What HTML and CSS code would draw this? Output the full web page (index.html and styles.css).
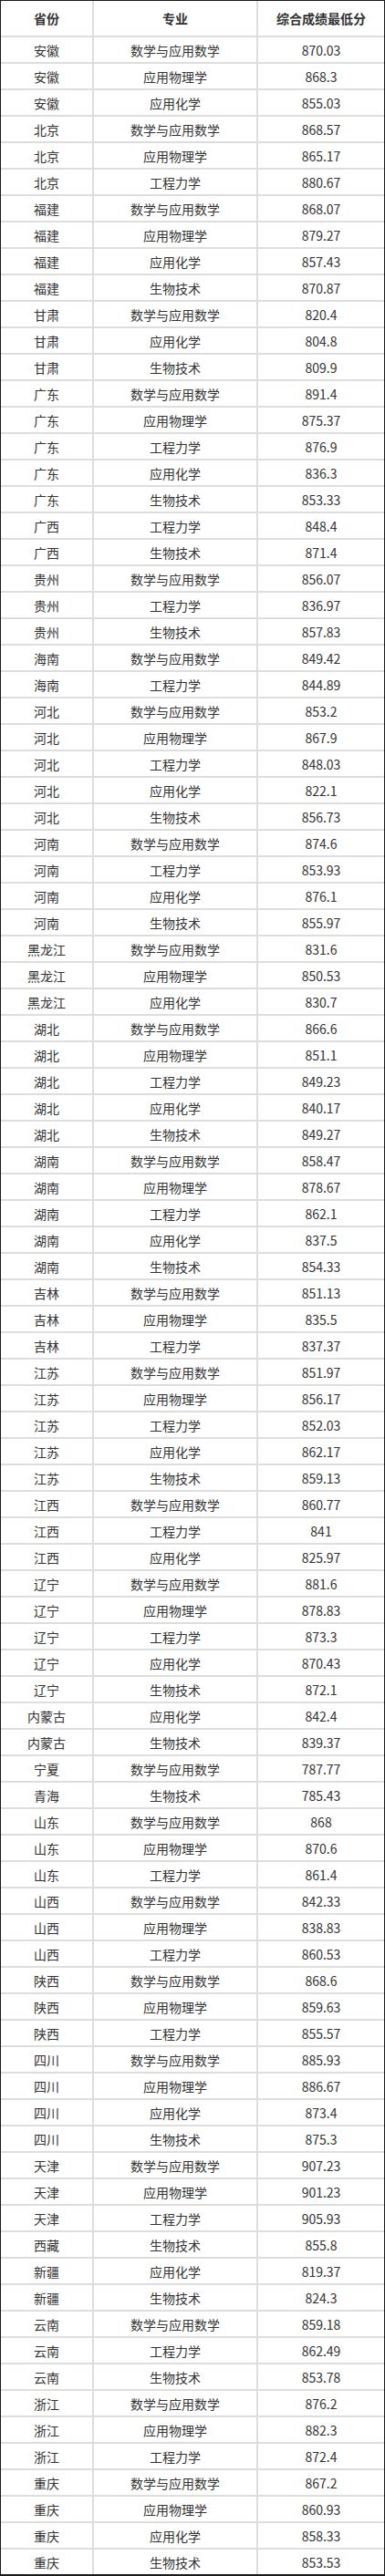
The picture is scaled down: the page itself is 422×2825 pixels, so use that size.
FILE: index.html
```html
<!DOCTYPE html>
<html lang="zh-CN">
<head>
<meta charset="utf-8">
<title>综合成绩最低分</title>
<link rel="stylesheet" href="styles.css">
</head>
<body>
<div class="table">
  <div class="row head"><div class="cell">省份</div><div class="cell">专业</div><div class="cell">综合成绩最低分</div></div>
  <div class="row"><div class="cell">安徽</div><div class="cell">数学与应用数学</div><div class="cell">870.03</div></div>
  <div class="row"><div class="cell">安徽</div><div class="cell">应用物理学</div><div class="cell">868.3</div></div>
  <div class="row"><div class="cell">安徽</div><div class="cell">应用化学</div><div class="cell">855.03</div></div>
  <div class="row"><div class="cell">北京</div><div class="cell">数学与应用数学</div><div class="cell">868.57</div></div>
  <div class="row"><div class="cell">北京</div><div class="cell">应用物理学</div><div class="cell">865.17</div></div>
  <div class="row"><div class="cell">北京</div><div class="cell">工程力学</div><div class="cell">880.67</div></div>
  <div class="row"><div class="cell">福建</div><div class="cell">数学与应用数学</div><div class="cell">868.07</div></div>
  <div class="row"><div class="cell">福建</div><div class="cell">应用物理学</div><div class="cell">879.27</div></div>
  <div class="row"><div class="cell">福建</div><div class="cell">应用化学</div><div class="cell">857.43</div></div>
  <div class="row"><div class="cell">福建</div><div class="cell">生物技术</div><div class="cell">870.87</div></div>
  <div class="row"><div class="cell">甘肃</div><div class="cell">数学与应用数学</div><div class="cell">820.4</div></div>
  <div class="row"><div class="cell">甘肃</div><div class="cell">应用化学</div><div class="cell">804.8</div></div>
  <div class="row"><div class="cell">甘肃</div><div class="cell">生物技术</div><div class="cell">809.9</div></div>
  <div class="row"><div class="cell">广东</div><div class="cell">数学与应用数学</div><div class="cell">891.4</div></div>
  <div class="row"><div class="cell">广东</div><div class="cell">应用物理学</div><div class="cell">875.37</div></div>
  <div class="row"><div class="cell">广东</div><div class="cell">工程力学</div><div class="cell">876.9</div></div>
  <div class="row"><div class="cell">广东</div><div class="cell">应用化学</div><div class="cell">836.3</div></div>
  <div class="row"><div class="cell">广东</div><div class="cell">生物技术</div><div class="cell">853.33</div></div>
  <div class="row"><div class="cell">广西</div><div class="cell">工程力学</div><div class="cell">848.4</div></div>
  <div class="row"><div class="cell">广西</div><div class="cell">生物技术</div><div class="cell">871.4</div></div>
  <div class="row"><div class="cell">贵州</div><div class="cell">数学与应用数学</div><div class="cell">856.07</div></div>
  <div class="row"><div class="cell">贵州</div><div class="cell">工程力学</div><div class="cell">836.97</div></div>
  <div class="row"><div class="cell">贵州</div><div class="cell">生物技术</div><div class="cell">857.83</div></div>
  <div class="row"><div class="cell">海南</div><div class="cell">数学与应用数学</div><div class="cell">849.42</div></div>
  <div class="row"><div class="cell">海南</div><div class="cell">工程力学</div><div class="cell">844.89</div></div>
  <div class="row"><div class="cell">河北</div><div class="cell">数学与应用数学</div><div class="cell">853.2</div></div>
  <div class="row"><div class="cell">河北</div><div class="cell">应用物理学</div><div class="cell">867.9</div></div>
  <div class="row"><div class="cell">河北</div><div class="cell">工程力学</div><div class="cell">848.03</div></div>
  <div class="row"><div class="cell">河北</div><div class="cell">应用化学</div><div class="cell">822.1</div></div>
  <div class="row"><div class="cell">河北</div><div class="cell">生物技术</div><div class="cell">856.73</div></div>
  <div class="row"><div class="cell">河南</div><div class="cell">数学与应用数学</div><div class="cell">874.6</div></div>
  <div class="row"><div class="cell">河南</div><div class="cell">工程力学</div><div class="cell">853.93</div></div>
  <div class="row"><div class="cell">河南</div><div class="cell">应用化学</div><div class="cell">876.1</div></div>
  <div class="row"><div class="cell">河南</div><div class="cell">生物技术</div><div class="cell">855.97</div></div>
  <div class="row"><div class="cell">黑龙江</div><div class="cell">数学与应用数学</div><div class="cell">831.6</div></div>
  <div class="row"><div class="cell">黑龙江</div><div class="cell">应用物理学</div><div class="cell">850.53</div></div>
  <div class="row"><div class="cell">黑龙江</div><div class="cell">应用化学</div><div class="cell">830.7</div></div>
  <div class="row"><div class="cell">湖北</div><div class="cell">数学与应用数学</div><div class="cell">866.6</div></div>
  <div class="row"><div class="cell">湖北</div><div class="cell">应用物理学</div><div class="cell">851.1</div></div>
  <div class="row"><div class="cell">湖北</div><div class="cell">工程力学</div><div class="cell">849.23</div></div>
  <div class="row"><div class="cell">湖北</div><div class="cell">应用化学</div><div class="cell">840.17</div></div>
  <div class="row"><div class="cell">湖北</div><div class="cell">生物技术</div><div class="cell">849.27</div></div>
  <div class="row"><div class="cell">湖南</div><div class="cell">数学与应用数学</div><div class="cell">858.47</div></div>
  <div class="row"><div class="cell">湖南</div><div class="cell">应用物理学</div><div class="cell">878.67</div></div>
  <div class="row"><div class="cell">湖南</div><div class="cell">工程力学</div><div class="cell">862.1</div></div>
  <div class="row"><div class="cell">湖南</div><div class="cell">应用化学</div><div class="cell">837.5</div></div>
  <div class="row"><div class="cell">湖南</div><div class="cell">生物技术</div><div class="cell">854.33</div></div>
  <div class="row"><div class="cell">吉林</div><div class="cell">数学与应用数学</div><div class="cell">851.13</div></div>
  <div class="row"><div class="cell">吉林</div><div class="cell">应用物理学</div><div class="cell">835.5</div></div>
  <div class="row"><div class="cell">吉林</div><div class="cell">工程力学</div><div class="cell">837.37</div></div>
  <div class="row"><div class="cell">江苏</div><div class="cell">数学与应用数学</div><div class="cell">851.97</div></div>
  <div class="row"><div class="cell">江苏</div><div class="cell">应用物理学</div><div class="cell">856.17</div></div>
  <div class="row"><div class="cell">江苏</div><div class="cell">工程力学</div><div class="cell">852.03</div></div>
  <div class="row"><div class="cell">江苏</div><div class="cell">应用化学</div><div class="cell">862.17</div></div>
  <div class="row"><div class="cell">江苏</div><div class="cell">生物技术</div><div class="cell">859.13</div></div>
  <div class="row"><div class="cell">江西</div><div class="cell">数学与应用数学</div><div class="cell">860.77</div></div>
  <div class="row"><div class="cell">江西</div><div class="cell">工程力学</div><div class="cell">841</div></div>
  <div class="row"><div class="cell">江西</div><div class="cell">应用化学</div><div class="cell">825.97</div></div>
  <div class="row"><div class="cell">辽宁</div><div class="cell">数学与应用数学</div><div class="cell">881.6</div></div>
  <div class="row"><div class="cell">辽宁</div><div class="cell">应用物理学</div><div class="cell">878.83</div></div>
  <div class="row"><div class="cell">辽宁</div><div class="cell">工程力学</div><div class="cell">873.3</div></div>
  <div class="row"><div class="cell">辽宁</div><div class="cell">应用化学</div><div class="cell">870.43</div></div>
  <div class="row"><div class="cell">辽宁</div><div class="cell">生物技术</div><div class="cell">872.1</div></div>
  <div class="row"><div class="cell">内蒙古</div><div class="cell">应用化学</div><div class="cell">842.4</div></div>
  <div class="row"><div class="cell">内蒙古</div><div class="cell">生物技术</div><div class="cell">839.37</div></div>
  <div class="row"><div class="cell">宁夏</div><div class="cell">数学与应用数学</div><div class="cell">787.77</div></div>
  <div class="row"><div class="cell">青海</div><div class="cell">生物技术</div><div class="cell">785.43</div></div>
  <div class="row"><div class="cell">山东</div><div class="cell">数学与应用数学</div><div class="cell">868</div></div>
  <div class="row"><div class="cell">山东</div><div class="cell">应用物理学</div><div class="cell">870.6</div></div>
  <div class="row"><div class="cell">山东</div><div class="cell">工程力学</div><div class="cell">861.4</div></div>
  <div class="row"><div class="cell">山西</div><div class="cell">数学与应用数学</div><div class="cell">842.33</div></div>
  <div class="row"><div class="cell">山西</div><div class="cell">应用物理学</div><div class="cell">838.83</div></div>
  <div class="row"><div class="cell">山西</div><div class="cell">工程力学</div><div class="cell">860.53</div></div>
  <div class="row"><div class="cell">陕西</div><div class="cell">数学与应用数学</div><div class="cell">868.6</div></div>
  <div class="row"><div class="cell">陕西</div><div class="cell">应用物理学</div><div class="cell">859.63</div></div>
  <div class="row"><div class="cell">陕西</div><div class="cell">工程力学</div><div class="cell">855.57</div></div>
  <div class="row"><div class="cell">四川</div><div class="cell">数学与应用数学</div><div class="cell">885.93</div></div>
  <div class="row"><div class="cell">四川</div><div class="cell">应用物理学</div><div class="cell">886.67</div></div>
  <div class="row"><div class="cell">四川</div><div class="cell">应用化学</div><div class="cell">873.4</div></div>
  <div class="row"><div class="cell">四川</div><div class="cell">生物技术</div><div class="cell">875.3</div></div>
  <div class="row"><div class="cell">天津</div><div class="cell">数学与应用数学</div><div class="cell">907.23</div></div>
  <div class="row"><div class="cell">天津</div><div class="cell">应用物理学</div><div class="cell">901.23</div></div>
  <div class="row"><div class="cell">天津</div><div class="cell">工程力学</div><div class="cell">905.93</div></div>
  <div class="row"><div class="cell">西藏</div><div class="cell">生物技术</div><div class="cell">855.8</div></div>
  <div class="row"><div class="cell">新疆</div><div class="cell">应用化学</div><div class="cell">819.37</div></div>
  <div class="row"><div class="cell">新疆</div><div class="cell">生物技术</div><div class="cell">824.3</div></div>
  <div class="row"><div class="cell">云南</div><div class="cell">数学与应用数学</div><div class="cell">859.18</div></div>
  <div class="row"><div class="cell">云南</div><div class="cell">工程力学</div><div class="cell">862.49</div></div>
  <div class="row"><div class="cell">云南</div><div class="cell">生物技术</div><div class="cell">853.78</div></div>
  <div class="row"><div class="cell">浙江</div><div class="cell">数学与应用数学</div><div class="cell">876.2</div></div>
  <div class="row"><div class="cell">浙江</div><div class="cell">应用物理学</div><div class="cell">882.3</div></div>
  <div class="row"><div class="cell">浙江</div><div class="cell">工程力学</div><div class="cell">872.4</div></div>
  <div class="row"><div class="cell">重庆</div><div class="cell">数学与应用数学</div><div class="cell">867.2</div></div>
  <div class="row"><div class="cell">重庆</div><div class="cell">应用物理学</div><div class="cell">860.93</div></div>
  <div class="row"><div class="cell">重庆</div><div class="cell">应用化学</div><div class="cell">858.33</div></div>
  <div class="row"><div class="cell">重庆</div><div class="cell">生物技术</div><div class="cell">853.53</div></div>
</div>
</body>
</html>
```
FILE: styles.css
```css
html, body {
  margin: 0;
  padding: 0;
  background: #ffffff;
}

body {
  font-family: "Noto Sans CJK SC", "Noto Sans", "Liberation Sans", sans-serif;
  font-size: 14px;
  color: #333333;
}

.table {
  width: 422px;
  box-sizing: border-box;
  border-left: 1px solid #1a1a1a;
  border-right: 1px solid #1a1a1a;
  border-top: 1px solid #1a1a1a;
  border-bottom: 2px solid #1a1a1a;
  background: #dddddd;
  display: flex;
  flex-direction: column;
  gap: 2px;
}

.row {
  display: grid;
  grid-template-columns: 100px 178px 138px;
  column-gap: 2px;
  height: 27px;
}

.row.head {
  height: 38px;
  font-weight: bold;
}

.cell {
  background: #ffffff;
  display: flex;
  align-items: center;
  justify-content: center;
  line-height: 1;
  white-space: nowrap;
}
```
